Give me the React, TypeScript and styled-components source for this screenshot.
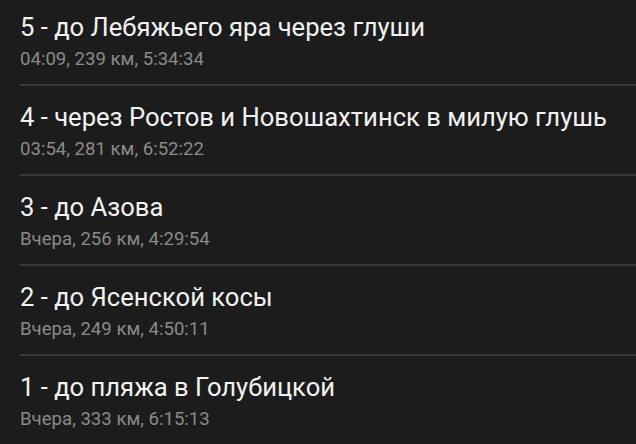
import React from "react";
import styled, { createGlobalStyle } from "styled-components";

const GlobalStyle = createGlobalStyle`
  html, body {
    margin: 0;
    padding: 0;
    background: #1c1c1c;
  }
  body {
    font-family: Roboto, "Noto Sans", sans-serif;
  }
`;

const List = styled.div`
  width: 636px;
  height: 444px;
  overflow: hidden;
  background: #1c1c1c;
`;

const Item = styled.div`
  margin-left: 20px;
  padding: 16px 0 14px;
  border-bottom: 2px solid #3a3a3a;

  &:first-child {
    padding-top: 12px;
  }

  &:last-child {
    border-bottom: none;
  }
`;

const Title = styled.div`
  font-size: 25.6px;
  line-height: 30px;
  color: #f2f2f2;
  white-space: nowrap;
`;

const Meta = styled.div`
  margin-top: 6px;
  font-size: 18.6px;
  line-height: 22px;
  color: #8a8a8a;
`;

interface Track {
  title: string;
  when: string;
  distance: number;
  duration: string;
}

const tracks: Track[] = [
  { title: "5 - до Лебяжьего яра через глуши", when: "04:09", distance: 239, duration: "5:34:34" },
  { title: "4 - через Ростов и Новошахтинск в милую глушь", when: "03:54", distance: 281, duration: "6:52:22" },
  { title: "3 - до Азова", when: "Вчера", distance: 256, duration: "4:29:54" },
  { title: "2 - до Ясенской косы", when: "Вчера", distance: 249, duration: "4:50:11" },
  { title: "1 - до пляжа в Голубицкой", when: "Вчера", distance: 333, duration: "6:15:13" },
];

const App: React.FC = () => {
  return (
    <>
      <GlobalStyle />
      <List>
        {tracks.map((t) => (
          <Item key={t.title}>
            <Title>{t.title}</Title>
            <Meta>
              {t.when}, {t.distance} км, {t.duration}
            </Meta>
          </Item>
        ))}
      </List>
    </>
  );
};

export default App;
